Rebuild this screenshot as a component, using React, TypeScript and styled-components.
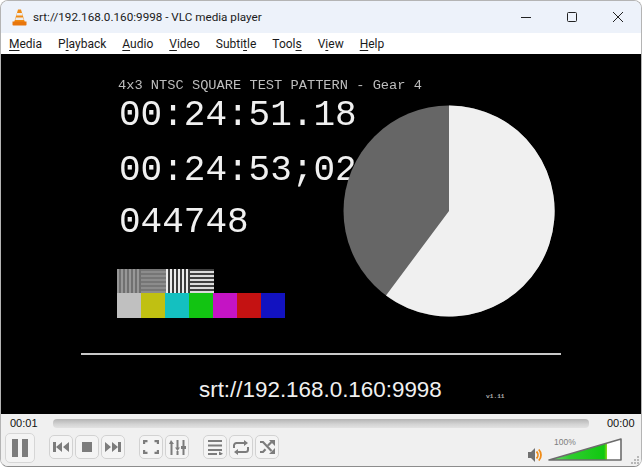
import React from 'react'
import styled, {createGlobalStyle} from 'styled-components'

const GlobalStyle = createGlobalStyle`
  html, body {
    margin: 0;
    padding: 0;
    background: #fff;
  }
`

const Window = styled.div`
  width: 642px;
  height: 467px;
  box-sizing: border-box;
  display: flex;
  flex-direction: column;
  border: 1px solid #b4b4b4;
  border-bottom-color: #8c8c8c;
  border-radius: 8px;
  overflow: hidden;
  font-family: Roboto, "Noto Sans", sans-serif;
`

const TitleBar = styled.div`
  height: 32px;
  flex: none;
  display: flex;
  align-items: center;
  background: #edf2fa;
  padding-left: 11px;
`

const Title = styled.div`
  margin-left: 6px;
  flex: 1;
  font-size: 11.7px;
  color: #1b1b1b;
`

const WinButton = styled.div`
  width: 46px;
  height: 32px;
  display: flex;
  align-items: center;
  justify-content: center;
`

const MenuBar = styled.div`
  height: 21px;
  flex: none;
  display: flex;
  align-items: center;
  gap: 16px;
  padding-left: 8px;
  background: #fff;
`

const MenuItem = styled.span`
  font-size: 12px;
  color: #1a1a1a;

  u {
    text-underline-offset: 2px;
  }
`

const Video = styled.div`
  position: relative;
  height: 360px;
  flex: none;
  background: #000;
  overflow: hidden;
`

const PatternTitle = styled.div`
  position: absolute;
  left: 117px;
  top: 24px;
  font: 13.7px/16px "Liberation Mono", monospace;
  color: #bdbdbd;
  white-space: pre;
  filter: blur(.3px);
`

const TimeCode = styled.div<{ $top: number }>`
  position: absolute;
  left: 118px;
  top: ${p => p.$top}px;
  font: 36px/40px "Liberation Mono", monospace;
  color: #f0f0f0;
  white-space: pre;
  filter: blur(.3px);
`

const Pie = styled.svg`
  position: absolute;
  left: 342px;
  top: 51px;
`

const Chart = styled.div`
  position: absolute;
  left: 116px;
  top: 215px;
  display: flex;
  flex-direction: column;
  filter: blur(.4px);
`

const ChartRow = styled.div`
  display: flex;
`

const Stripes = styled.div<{ $pattern: string }>`
  width: 24.3px;
  height: 24px;
  background: ${p => p.$pattern};
`

const Bar = styled.div<{ $color: string }>`
  width: 24px;
  height: 25px;
  background: ${p => p.$color};
`

const Rule = styled.div`
  position: absolute;
  left: 80px;
  top: 299px;
  width: 480px;
  height: 2px;
  background: #c8c8c8;
`

const Caption = styled.div`
  position: absolute;
  left: 198px;
  top: 323px;
  font: 22.4px/26px "Liberation Sans", sans-serif;
  color: #f0f0f0;
`

const Version = styled.div`
  position: absolute;
  left: 485px;
  top: 339px;
  font: bold 6.2px/8px "Liberation Mono", monospace;
  color: #b0b0b0;
`

const Controls = styled.div`
  flex: 1;
  display: flex;
  flex-direction: column;
  background: #f0f0f0;
`

const SeekRow = styled.div`
  display: flex;
  align-items: center;
  height: 18px;
  padding: 0 7px 0 9px;
`

const Time = styled.span`
  width: 27px;
  font: 11px "Liberation Sans", sans-serif;
  color: #111;
`

const SeekTrack = styled.div`
  flex: 1;
  height: 9px;
  margin: 0 18px 0 16px;
  border-radius: 4px;
  background: linear-gradient(#b4b4b4, #d4d4d4 60%, #e2e2e2);
`

const ButtonRow = styled.div`
  position: relative;
  flex: 1;
  display: flex;
  align-items: flex-start;
  padding: 1px 0 0 4px;
`

const Group = styled.div<{ $left: number }>`
  display: flex;
  gap: 2px;
  margin-left: ${p => p.$left}px;
  margin-top: 2px;
`

const BigButton = styled.div`
  width: 30px;
  height: 30px;
  box-sizing: border-box;
  display: flex;
  align-items: center;
  justify-content: center;
  border: 1px solid #d6d6d6;
  border-radius: 5px;
  background: #f4f4f4;
`

const SmallButton = styled.div`
  width: 24px;
  height: 24px;
  box-sizing: border-box;
  display: flex;
  align-items: center;
  justify-content: center;
  border: 1px solid #d2d2d2;
  border-radius: 5px;
  background: #f4f4f4;
`

const Volume = styled.div`
  margin-left: auto;
  margin-right: 18px;
  margin-top: 5px;
  display: flex;
  align-items: flex-end;
  gap: 5px;
`

const VolumeMeter = styled.div`
  position: relative;
  width: 75px;
  height: 24px;
`

const Percent = styled.span`
  position: absolute;
  left: 6px;
  top: -1px;
  font: 8.500px/10px "Liberation Sans", sans-serif;
  color: #7d7d7d;
`

const Grip = styled.svg`
  position: absolute;
  right: 1px;
  bottom: 1px;
`

const ICON = '#7c7c7c'

const TitleCone = () => (
  <svg width="15" height="17" viewBox="0 0 15 17">
    <path d="M6 .5h3l3.800 12.500H2.200z" fill="#f08a12"/>
    <path d="M5 4h5l.7 2.500H4.300zM3.900 8.500h7.200l.7 2.500H3.200z" fill="#ececec"/>
    <path d="M.5 12.500h14v3.200a.8.8 0 0 1-.8.8H1.300a.8.8 0 0 1-.8-.8z" fill="#e8760c"/>
  </svg>
)

const Pause = () => (
  <svg width="16" height="18" viewBox="0 0 16 18"><path d="M0 0h6v18H0zM10 0h6v18h-6z" fill={ICON}/></svg>
)
const Prev = () => (
  <svg width="16" height="10" viewBox="0 0 16 10"><path d="M0 0h3v10H0zM9 0v10L3 5zM16 0v10L10 5z" fill={ICON}/></svg>
)
const Stop = () => (
  <svg width="10" height="10" viewBox="0 0 10 10"><path d="M0 0h10v10H0z" fill={ICON}/></svg>
)
const Next = () => (
  <svg width="16" height="10" viewBox="0 0 16 10"><path d="M16 0h-3v10h3zM7 0v10l6-5zM0 0v10l6-5z" fill={ICON}/></svg>
)
const Fullscreen = () => (
  <svg width="16" height="14" viewBox="0 0 16 14" fill="none" stroke={ICON} strokeWidth="2.200">
    <path d="M1.100 4V1.100H4.500M11.500 1.100h3.400V4M14.900 10v2.900H11.500M4.500 12.900H1.100V10"/>
  </svg>
)
const Equalizer = () => (
  <svg width="17" height="15" viewBox="0 0 17 15" fill={ICON}>
    <path d="M2 0l3 4H3.500v11h-2V4H0zM7.500 0h2v7.500H11L8.500 11 6 7.500h1.500zM7.500 11h2v4h-2zM13.500 0h2v6H17v3h-1.500v6h-2V9H12V6h1.500z"/>
  </svg>
)
const Playlist = () => (
  <svg width="15" height="15" viewBox="0 0 15 15" fill={ICON}>
    <path d="M0 0h14v2H0zM0 4.500h14v2H0zM0 9h14v2H0zM0 13h9v2H0zM11 11.500l4 2.250-4 2.250z"/>
  </svg>
)
const Loop = () => (
  <svg width="16" height="15" viewBox="0 0 16 15" fill="none" stroke={ICON} strokeWidth="2">
    <path d="M1 8V5.500A2.500 2.500 0 0 1 3.500 3H12M15 7v2.500A2.500 2.500 0 0 1 12.500 12H4"/>
    <path d="M11 0l4 3-4 3zM5 9l-4 3 4 3z" fill={ICON} stroke="none"/>
  </svg>
)
const Shuffle = () => (
  <svg width="15" height="14" viewBox="0 0 15 14" fill="none" stroke={ICON} strokeWidth="2.200">
    <path d="M0 2h3l8.500 9M0 12h3l2.500-2.800M8 5.500l3.500-3.500"/>
    <path d="M9 0h6v6zM15 8v6H9z" fill={ICON} stroke="none"/>
  </svg>
)

const barColors = ['#c0c0c0', '#c0c012', '#14c0c0', '#12c412', '#c414c4', '#c41212', '#1212c0']
const patterns = [
  'repeating-linear-gradient(90deg, #979797 0 2px, #707070 2px 4px)',
  'repeating-linear-gradient(0deg, #8c8c8c 0 2px, #767676 2px 4px)',
  'repeating-linear-gradient(90deg, #ececec 0 2px, #3c3c3c 2px 4px)',
  'repeating-linear-gradient(0deg, #dcdcdc 0 2px, #404040 2px 4px)',
]

const menus: [string, string, string][] = [
  ['', 'M', 'edia'],
  ['P', 'l', 'ayback'],
  ['', 'A', 'udio'],
  ['', 'V', 'ideo'],
  ['Subti', 't', 'le'],
  ['Tool', 's', ''],
  ['V', 'i', 'ew'],
  ['', 'H', 'elp'],
]

const App: React.FC = () => (
  <>
    <GlobalStyle/>
    <Window>
      <TitleBar>
        <TitleCone/>
        <Title>srt://192.168.0.160:9998 - VLC media player</Title>
        <WinButton>
          <svg width="10" height="10" viewBox="0 0 10 10"><path d="M0 5.500h10" stroke="#222"/></svg>
        </WinButton>
        <WinButton>
          <svg width="10" height="10" viewBox="0 0 10 10"><rect x=".5" y=".5" width="9" height="9" rx="1" fill="none" stroke="#222"/></svg>
        </WinButton>
        <WinButton>
          <svg width="10" height="10" viewBox="0 0 10 10"><path d="M0 0l10 10M10 0L0 10" stroke="#222"/></svg>
        </WinButton>
      </TitleBar>
      <MenuBar>
        {menus.map(([a, u, b]) => <MenuItem key={a + u + b}>{a}<u>{u}</u>{b}</MenuItem>)}
      </MenuBar>
      <Video>
        <PatternTitle>4x3 NTSC SQUARE TEST PATTERN - Gear 4</PatternTitle>
        <TimeCode $top={42}>00:24:51.18</TimeCode>
        <TimeCode $top={97}>00:24:53;02</TimeCode>
        <TimeCode $top={149}>044748</TimeCode>
        <Pie width="212" height="212" viewBox="0 0 212 212">
          <circle cx="106" cy="106" r="105.500" fill="#666"/>
          <path d="M106 .5A105.500 105.500 0 1 1 43 190.500L106 106z" fill="#f0f0f0"/>
        </Pie>
        <Chart>
          <ChartRow>
            {patterns.map(p => <Stripes key={p} $pattern={p}/>)}
          </ChartRow>
          <ChartRow>
            {barColors.map(c => <Bar key={c} $color={c}/>)}
          </ChartRow>
        </Chart>
        <Rule/>
        <Caption>srt://192.168.0.160:9998</Caption>
        <Version>v1.11</Version>
      </Video>
      <Controls>
        <SeekRow>
          <Time>00:01</Time>
          <SeekTrack/>
          <Time>00:00</Time>
        </SeekRow>
        <ButtonRow>
          <BigButton><Pause/></BigButton>
          <Group $left={14}>
            <SmallButton><Prev/></SmallButton>
            <SmallButton><Stop/></SmallButton>
            <SmallButton><Next/></SmallButton>
          </Group>
          <Group $left={14}>
            <SmallButton><Fullscreen/></SmallButton>
            <SmallButton><Equalizer/></SmallButton>
          </Group>
          <Group $left={14}>
            <SmallButton><Playlist/></SmallButton>
            <SmallButton><Loop/></SmallButton>
            <SmallButton><Shuffle/></SmallButton>
          </Group>
          <Volume>
            <svg width="15" height="14" viewBox="0 0 15 14">
              <path d="M0 4h3l4-4v14l-4-4H0z" fill="#707070"/>
              <path d="M8.500 3.500a5 5 0 0 1 0 7M10.800 1.500a8 8 0 0 1 0 11" fill="none" stroke="#f08c18" strokeWidth="1.800"/>
            </svg>
            <VolumeMeter>
              <Percent>100%</Percent>
              <svg width="75" height="24" viewBox="0 0 75 24">
                <defs>
                  <linearGradient id="vol" x1="0" x2="1" y1="0" y2="0">
                    <stop offset="0" stopColor="#80d880"/>
                    <stop offset=".35" stopColor="#30cc30"/>
                    <stop offset=".95" stopColor="#10c810"/>
                    <stop offset="1" stopColor="#90d820"/>
                  </linearGradient>
                </defs>
                <path d="M1 22L73 1v21z" fill="#fff"/>
                <path d="M1 22L59 5.100V22z" fill="url(#vol)"/>
                <path d="M1 22L73 1v21z" fill="none" stroke="#6c6c6c" strokeWidth="1.600" strokeLinejoin="round"/>
              </svg>
            </VolumeMeter>
          </Volume>
          <Grip width="10" height="10" viewBox="0 0 10 10" fill="#b8b8b8">
            <path d="M7 1h2v2H7zM4 4h2v2H4zM7 4h2v2H7zM1 7h2v2H1zM4 7h2v2H4zM7 7h2v2H7z"/>
          </Grip>
        </ButtonRow>
      </Controls>
    </Window>
  </>
)

export default App
